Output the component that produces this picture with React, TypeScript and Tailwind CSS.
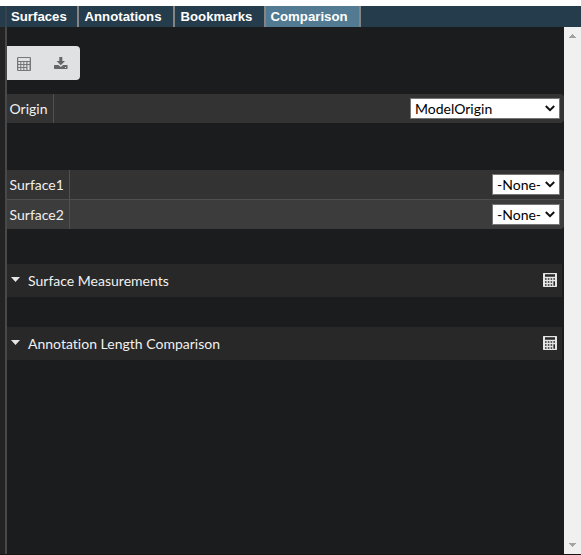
import React from "react";

function Calculator({ className }: { className: string }) {
  return (
    <svg className={className} width="14" height="14" viewBox="0 0 14 14" fill="currentColor">
      <path
        fillRule="evenodd"
        d="M.8 0h12.4l.8.8v12.4l-.8.8H.8L0 13.2V.8zM1.2 1v3h11.6V1zM1.3 5v2h2V5zM4.3 5v2h2V5zM7.3 5v2h2V5zM10.5 5v2h2V5zM1.3 8v2h2V8zM4.3 8v2h2V8zM7.3 8v2h2V8zM1.3 11v2h2v-2zM4.3 11v2h2v-2zM7.3 11v2h2v-2zM10.5 8v5h2V8z"
      />
    </svg>
  );
}

function SolidCalculator({ className }: { className: string }) {
  return (
    <svg className={className} width="14" height="14" viewBox="0 0 14 14" fill="currentColor">
      <path
        fillRule="evenodd"
        d="M.5 0h13l.5.5v13l-.5.5H.5L0 13.500V.5zM2 1.200v2.600h10V1.200zM2 5.200v1.500h1.600V5.200zM4.800 5.200v1.500h1.600V5.200zM7.600 5.200v1.500h1.600V5.200zM10.400 5.200v1.500h1.600V5.200zM2 8.200v1.500h1.600V8.200zM4.800 8.200v1.500h1.600V8.200zM7.600 8.200v1.500h1.600V8.200zM2 11.200v1.500h1.600v-1.500zM4.800 11.200v1.500h1.600v-1.500zM7.600 11.200v1.500h1.600v-1.500zM10.400 8.200v4.500h1.600V8.200z"
      />
    </svg>
  );
}

function Download() {
  return (
    <svg className="text-[#666667]" width="14" height="13" viewBox="0 0 14 13" fill="currentColor">
      <path d="M5.300 0h3v4H11L6.800 8.200 2.600 4h2.700z" />
      <path fillRule="evenodd" d="M.6 8h3.800l2.400 2 2.400-2h3.800l.6.6v2.800l-.6.6H.6l-.6-.6V8.600zM11 10v1h1v-1z" />
    </svg>
  );
}

function Select({ value, className }: { value: string; className: string }) {
  return (
    <div className={`flex h-[21px] items-center justify-between border border-[#767676] bg-white pl-1 pr-1 text-black ${className}`}>
      <span className="leading-5">{value}</span>
      <svg width="10" height="7" viewBox="0 0 10 7" fill="none" stroke="#101010" strokeWidth="2">
        <path d="M.8 1 5 5.200 9.200 1" />
      </svg>
    </div>
  );
}

function Row({ label, labelWidth, className, children }: { label: string; labelWidth: string; className: string; children: React.ReactNode }) {
  return (
    <div className={`flex items-stretch justify-between pr-1 ${className}`}>
      <div className={`flex items-center border-r border-[#505050] pl-[2.5px] ${labelWidth}`}>{label}</div>
      <div className="flex items-center">{children}</div>
    </div>
  );
}

function Section({ title }: { title: string }) {
  return (
    <div className="mr-[2px] flex h-[33px] items-center bg-[#282828] pr-[5px]">
      <svg className="mb-[3px] ml-[4px] mr-[8px]" width="9" height="5" viewBox="0 0 9 5">
        <path d="M0 0h9L4.500 5z" fill="#e6e6e6" />
      </svg>
      <span className="grow">{title}</span>
      <SolidCalculator className="mb-[1px] text-[#e6e6e6]" />
    </div>
  );
}

const tabs = [
  { name: "Surfaces", style: "w-[72px] pl-[4px]" },
  { name: "Annotations", style: "w-[96px] pl-[5.500px]" },
  { name: "Bookmarks", style: "w-[91px] pl-[5.500px]" },
  { name: "Comparison", style: "w-[95px] bg-[#527a93] pl-[4.500px]" },
];

export default function App() {
  return (
    <div className="flex h-[555px] w-[581px] flex-col overflow-hidden border-b border-[#191314] bg-[#1b1c1d] pt-[6px] font-['Lato','Noto_Sans',sans-serif] text-[14px] tracking-[0.01px] text-[#f0f0f0] shadow-[inset_0_6px_white]">
      <div className="flex h-[21px] shrink-0 bg-[#243c4c]">
        <div className="w-[7px] shrink-0 border-r-2 border-[#34434d]" />
        {tabs.map((t) => (
          <div
            key={t.name}
            className={`h-[21px] shrink-0 border-r-2 border-[#858585] font-['Liberation_Sans',Arial,sans-serif] text-[13.2px] font-bold leading-[21px] text-white ${t.style}`}
          >
            {t.name}
          </div>
        ))}
      </div>
      <div className="flex grow">
        <div className="w-[7px] shrink-0 border-r-2 border-[#484848] bg-[#232323]" />
        <div className="flex w-[557px] flex-col">
          <div className="mt-[19px] flex h-[34px] w-[73px] items-center rounded-r-[4px] bg-[#e0e1e2]">
            <Calculator className="ml-[10px] mt-[2px] text-[#767677]" />
            <div className="ml-[23px]">
              <Download />
            </div>
          </div>
          <Row label="Origin" labelWidth="w-[47px]" className="mt-[14px] h-[29px] rounded-r-[4px] bg-[#333333]">
            <Select value="ModelOrigin" className="w-[150px]" />
          </Row>
          <div className="mt-[47px] overflow-hidden rounded-r-[4px]">
            <Row label="Surface1" labelWidth="w-[63px]" className="h-[29px] bg-[#333333]">
              <Select value="-None-" className="w-[68px]" />
            </Row>
            <Row label="Surface2" labelWidth="w-[63px]" className="h-[30px] border-t border-[#505050] bg-[#3c3c3c]">
              <Select value="-None-" className="w-[68px]" />
            </Row>
          </div>
          <div className="mt-[35px] flex flex-col gap-[30px]">
            <Section title="Surface Measurements" />
            <Section title="Annotation Length Comparison" />
          </div>
        </div>
        <div className="flex w-[17px] flex-col items-center justify-between bg-[#f0f0f0] pb-[7px] pt-[7px]">
          <svg width="7" height="4" viewBox="0 0 7 4" shapeRendering="crispEdges">
            <path d="M3 0h1v1h1v1h1v1h1v1H0V3h1V2h1V1h1z" fill="#a3a3a3" />
          </svg>
          <svg width="7" height="4" viewBox="0 0 7 4" shapeRendering="crispEdges">
            <path d="M0 0h7v1H6v1H5v1H4v1H3V3H2V2H1V1H0z" fill="#a3a3a3" />
          </svg>
        </div>
      </div>
    </div>
  );
}
